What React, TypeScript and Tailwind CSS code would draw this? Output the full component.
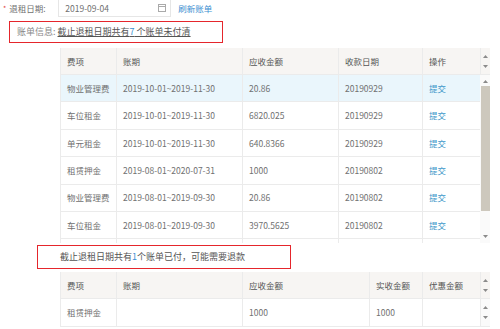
const FONT = { fontFamily: '"Noto Sans CJK SC", "Microsoft YaHei", sans-serif' };

const unpaid = [
  { item: "物业管理费", period: "2019-10-01~2019-11-30", amount: "20.86", date: "20190929" },
  { item: "车位租金", period: "2019-10-01~2019-11-30", amount: "6820.025", date: "20190929" },
  { item: "单元租金", period: "2019-10-01~2019-11-30", amount: "640.8366", date: "20190929" },
  { item: "租赁押金", period: "2019-08-01~2020-07-31", amount: "1000", date: "20190802" },
  { item: "物业管理费", period: "2019-08-01~2019-09-30", amount: "20.86", date: "20190802" },
  { item: "车位租金", period: "2019-08-01~2019-09-30", amount: "3970.5625", date: "20190802" },
];

function Arrow({ up }: { up?: boolean }) {
  return (
    <svg width="5" height="3" viewBox="0 0 5 3" className="block">
      <path d={up ? "M0 3 L2.5 0 L5 3 Z" : "M0 0 L2.5 3 L5 0 Z"} fill="#8a8a8a" />
    </svg>
  );
}

function HeaderScroll() {
  return (
    <div className="w-[10px] h-full flex flex-col items-center justify-around py-[3px] bg-[#f7f5f3]">
      <Arrow up />
      <Arrow />
    </div>
  );
}

const cell = "h-full flex items-center px-[6px] border-r border-[#ebebeb] shrink-0";

export default function App() {
  return (
    <div className="w-[500px] h-[329px] overflow-hidden bg-white text-[8.5px] text-[#707070]" style={FONT}>
      {/* 退租日期 */}
      <div className="flex items-center h-[17px]">
        <span className="text-[#e23b3b] ml-[3px] mr-[3px] text-[7px]">*</span>
        <span className="w-[49px]">退租日期:</span>
        <div className="w-[113px] h-[17px] border-l border-b border-r border-[#e6e6e6] flex items-center pl-[6px] pr-[4px]">
          <span className="flex-1">2019-09-04</span>
          <svg width="8" height="8" viewBox="0 0 8 8">
            <rect x="0.5" y="0.5" width="7" height="7" fill="none" stroke="#aaa" />
            <line x1="0.5" y1="2.5" x2="7.5" y2="2.5" stroke="#aaa" />
          </svg>
        </div>
        <span className="ml-[7px] text-[#3c8fd1]">刷新账单</span>
      </div>

      {/* red box 1 */}
      <div className="ml-[9px] mt-[4px] w-[214px] h-[22px] border-[1.5px] border-[#e5262c] flex items-center pl-[7px] text-[9px]">
        <span className="text-[#888]">账单信息:</span>
        <span className="ml-[2px] underline text-[#555]">
          截止退租日期共有<span className="text-[#3c8fd1]">7</span> 个账单未付清
        </span>
      </div>

      {/* table 1 */}
      <div className="ml-[60px] mt-[5px] w-[430px]">
        <div className="flex h-[27px] bg-[#f7f5f3] border-b border-l border-[#ebebeb] text-[#555]">
          <div className={`${cell} w-[56px]`}>费项</div>
          <div className={`${cell} w-[126px]`}>账期</div>
          <div className={`${cell} w-[96px]`}>应收金额</div>
          <div className={`${cell} w-[84px]`}>收款日期</div>
          <div className={`${cell} w-[58px]`}>操作</div>
          <HeaderScroll />
        </div>
        <div className="flex h-[168px] overflow-hidden">
          <div className="w-[420px] border-l border-[#ebebeb]">
            {unpaid.map((r, i) => (
              <div
                key={i}
                className={`flex h-[27.4px] border-b border-[#ebebeb] ${i === 0 ? "bg-[#eaf6fc]" : "bg-white"}`}
              >
                <div className={`${cell} w-[56px]`}>{r.item}</div>
                <div className={`${cell} w-[126px]`}>{r.period}</div>
                <div className={`${cell} w-[96px]`}>{r.amount}</div>
                <div className={`${cell} w-[84px]`}>{r.date}</div>
                <div className={`${cell} w-[58px] text-[#3a97c9]`}>提交</div>
              </div>
            ))}
            <div className="flex h-[8px]">
              <div className={`${cell} w-[56px]`} />
              <div className={`${cell} w-[126px]`} />
              <div className={`${cell} w-[96px]`} />
              <div className={`${cell} w-[84px]`} />
              <div className={`${cell} w-[58px]`} />
            </div>
          </div>
          <div className="w-[10px] h-full flex flex-col items-center bg-[#fafafa] pt-[5px] pb-[5px]">
            <Arrow up />
            <div className="w-[9px] h-[125px] mt-[3px] bg-[#cdc8bd]" />
            <div className="flex-1" />
            <Arrow />
          </div>
        </div>
      </div>

      {/* red box 2 */}
      <div className="ml-[37px] mt-[2px] w-[254px] h-[24px] border-[1.5px] border-[#e5262c] flex items-center pl-[22px] text-[9px] text-[#555]">
        截止退租日期共有<span className="text-[#3c8fd1]">1</span>个账单已付，可能需要退款
      </div>

      {/* table 2 */}
      <div className="ml-[60px] mt-[3px] w-[430px]">
        <div className="flex h-[27px] bg-[#f7f5f3] border-b border-l border-[#ebebeb] text-[#555]">
          <div className={`${cell} w-[56px]`}>费项</div>
          <div className={`${cell} w-[126px]`}>账期</div>
          <div className={`${cell} w-[127px]`}>应收金额</div>
          <div className={`${cell} w-[53px]`}>实收金额</div>
          <div className={`${cell} w-[58px]`}>优惠金额</div>
          <HeaderScroll />
        </div>
        <div className="flex h-[28px] border-b border-l border-[#ebebeb]">
          <div className={`${cell} w-[56px]`}>租赁押金</div>
          <div className={`${cell} w-[126px]`}></div>
          <div className={`${cell} w-[127px]`}>1000</div>
          <div className={`${cell} w-[53px]`}>1000</div>
          <div className={`${cell} w-[58px]`}></div>
          <div className="w-[10px] h-full flex flex-col items-center justify-around py-[3px] bg-[#fafafa]">
            <Arrow up />
            <Arrow />
          </div>
        </div>
      </div>
    </div>
  );
}
